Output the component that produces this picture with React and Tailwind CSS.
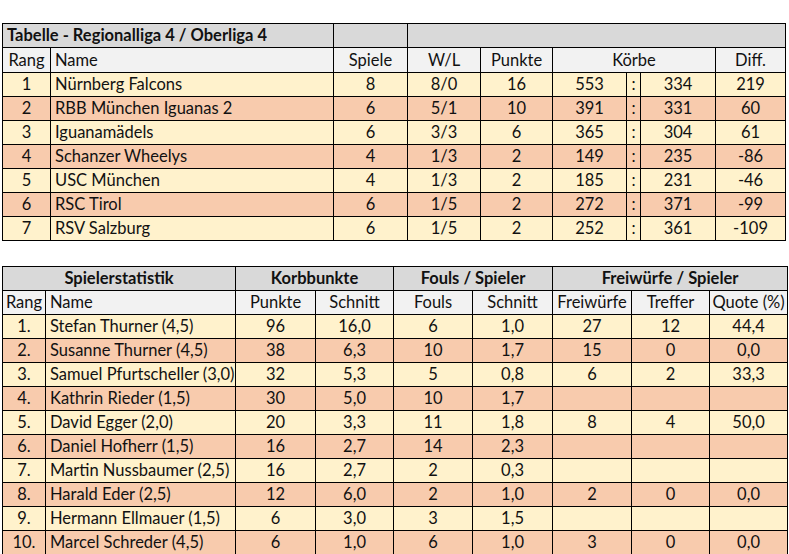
import React from "react";

const teams = [
  ["1", "Nürnberg Falcons", "8", "8/0", "16", "553", "334", "219"],
  ["2", "RBB München Iguanas 2", "6", "5/1", "10", "391", "331", "60"],
  ["3", "Iguanamädels", "6", "3/3", "6", "365", "304", "61"],
  ["4", "Schanzer Wheelys", "4", "1/3", "2", "149", "235", "-86"],
  ["5", "USC München", "4", "1/3", "2", "185", "231", "-46"],
  ["6", "RSC Tirol", "6", "1/5", "2", "272", "371", "-99"],
  ["7", "RSV Salzburg", "6", "1/5", "2", "252", "361", "-109"],
];

const players = [
  ["1.", "Stefan Thurner (4,5)", "96", "16,0", "6", "1,0", "27", "12", "44,4"],
  ["2.", "Susanne Thurner (4,5)", "38", "6,3", "10", "1,7", "15", "0", "0,0"],
  ["3.", "Samuel Pfurtscheller (3,0)", "32", "5,3", "5", "0,8", "6", "2", "33,3"],
  ["4.", "Kathrin Rieder (1,5)", "30", "5,0", "10", "1,7", "", "", ""],
  ["5.", "David Egger (2,0)", "20", "3,3", "11", "1,8", "8", "4", "50,0"],
  ["6.", "Daniel Hofherr (1,5)", "16", "2,7", "14", "2,3", "", "", ""],
  ["7.", "Martin Nussbaumer (2,5)", "16", "2,7", "2", "0,3", "", "", ""],
  ["8.", "Harald Eder (2,5)", "12", "6,0", "2", "1,0", "2", "0", "0,0"],
  ["9.", "Hermann Ellmauer (1,5)", "6", "3,0", "3", "1,5", "", "", ""],
  ["10.", "Marcel Schreder (4,5)", "6", "1,0", "6", "1,0", "3", "0", "0,0"],
];

const td = "border border-black p-0 text-center whitespace-nowrap overflow-hidden";
const tdName = "border border-black p-0 pl-1 text-left whitespace-nowrap overflow-hidden";

const LeagueTable = () => (
  <table className="table-fixed border-collapse w-[783px]">
    <colgroup>
      <col className="w-[48px]" />
      <col className="w-[283px]" />
      <col className="w-[74px]" />
      <col className="w-[73px]" />
      <col className="w-[72px]" />
      <col className="w-[74px]" />
      <col className="w-[14px]" />
      <col className="w-[75px]" />
      <col className="w-[70px]" />
    </colgroup>
    <tbody>
      <tr className="h-[24px] bg-[#d9d9d9]">
        <td colSpan={2} className="border border-black p-0 pl-1 font-bold text-left">
          Tabelle - Regionalliga 4 / Oberliga 4
        </td>
        <td className={td}></td>
        <td colSpan={6} className={td}></td>
      </tr>
      <tr className="h-[25px] bg-[#f2f2f2]">
        <td className={td}>Rang</td>
        <td className={tdName}>Name</td>
        <td className={td}>Spiele</td>
        <td className={td}>W/L</td>
        <td className={td}>Punkte</td>
        <td colSpan={3} className={td}>Körbe</td>
        <td className={td}>Diff.</td>
      </tr>
      {teams.map((t, i) => (
        <tr key={t[0]} className={`h-[24px] ${i % 2 ? "bg-[#f8cbad]" : "bg-[#fff2cc]"}`}>
          <td className={td}>{t[0]}</td>
          <td className={tdName}>{t[1]}</td>
          <td className={td}>{t[2]}</td>
          <td className={td}>{t[3]}</td>
          <td className={td}>{t[4]}</td>
          <td className={td}>{t[5]}</td>
          <td className={td}>:</td>
          <td className={td}>{t[6]}</td>
          <td className={td}>{t[7]}</td>
        </tr>
      ))}
    </tbody>
  </table>
);

const PlayerTable = () => (
  <table className="table-fixed border-collapse w-[785px]">
    <colgroup>
      <col className="w-[43px]" />
      <col className="w-[190px]" />
      <col className="w-[80px]" />
      <col className="w-[78px]" />
      <col className="w-[79px]" />
      <col className="w-[80px]" />
      <col className="w-[79px]" />
      <col className="w-[78px]" />
      <col className="w-[78px]" />
    </colgroup>
    <tbody>
      <tr className="h-[24px] bg-[#d9d9d9] font-bold">
        <td colSpan={2} className={td}>Spielerstatistik</td>
        <td colSpan={2} className={td}>Korbbunkte</td>
        <td colSpan={2} className={td}>Fouls / Spieler</td>
        <td colSpan={3} className={td}>Freiwürfe / Spieler</td>
      </tr>
      <tr className="h-[24px] bg-[#f2f2f2]">
        <td className={td}>Rang</td>
        <td className={tdName}>Name</td>
        <td className={td}>Punkte</td>
        <td className={td}>Schnitt</td>
        <td className={td}>Fouls</td>
        <td className={td}>Schnitt</td>
        <td className={td}>Freiwürfe</td>
        <td className={td}>Treffer</td>
        <td className={td}>Quote (%)</td>
      </tr>
      {players.map((p, i) => (
        <tr key={p[0]} className={`h-[24px] ${i % 2 ? "bg-[#f8cbad]" : "bg-[#fff2cc]"}`}>
          <td className={td}>{p[0]}</td>
          <td className={tdName}>{p[1]}</td>
          {p.slice(2).map((v, j) => (
            <td key={j} className={td}>{v}</td>
          ))}
        </tr>
      ))}
    </tbody>
  </table>
);

const App = () => {
  return (
    <div className="w-[789px] h-[554px] bg-white overflow-hidden text-[16.5px] leading-none text-[#111] font-['Lato','Open_Sans',sans-serif]">
      <div className="flex flex-col gap-[25px] pt-[23px] pl-[2px]">
        <LeagueTable />
        <PlayerTable />
      </div>
    </div>
  );
};

export default App;
